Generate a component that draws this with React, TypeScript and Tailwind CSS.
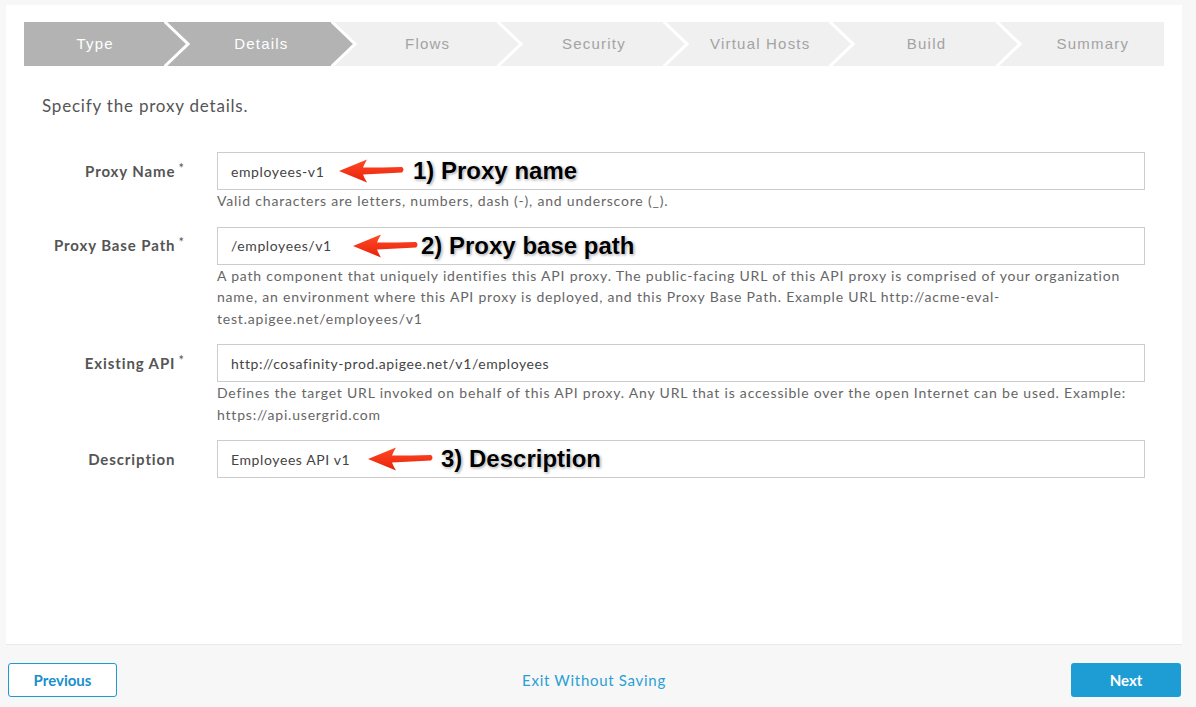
import React from 'react'

const steps = ['Type', 'Details', 'Flows', 'Security', 'Virtual Hosts', 'Build', 'Summary']
const activeCount = 2

const ACTIVE = '#b3b3b3'
const IDLE = '#f0f0f0'

function Chevron({ next }: { next: string }) {
  return (
    <svg className="absolute right-0 top-0 h-[44px] w-[26px]" viewBox="0 0 26 44">
      <polygon points="0,0 26,0 26,44 0,44 24,22" fill={next} />
      <polyline points="0,-1 24,22 0,45" fill="none" stroke="#fff" strokeWidth="3" />
    </svg>
  )
}

function Arrow() {
  return (
    <svg width="66" height="24" viewBox="0 0 66 24" className="shrink-0">
      <defs>
        <linearGradient id="arrowFill" x1="0" y1="0" x2="0" y2="1">
          <stop offset="0" stopColor="#ff4a26" />
          <stop offset="1" stopColor="#e8220a" />
        </linearGradient>
      </defs>
      <path
        d="M0 12 L28 0.5 Q25 5.5 24 8.5 Q44 8.5 63 8 Q66 10.5 63 13.5 Q44 14.5 24 15.5 Q25 18.5 28 23.5 Z"
        fill="url(#arrowFill)"
      />
    </svg>
  )
}

function Note({ left, arrowGap, text }: { left: number; arrowGap: number; text: string }) {
  return (
    <div className="pointer-events-none absolute top-0 flex h-full items-center" style={{ left }}>
      <Arrow />
      <span
        className="font-['Liberation_Sans',Arial,sans-serif] text-[24px] leading-none font-bold tracking-normal text-black [text-shadow:0_0_1px_#fff,0_0_2px_#fff,1px_1px_3px_rgba(0,0,0,0.45)]"
        style={{ marginLeft: arrowGap }}
      >
        {text}
      </span>
    </div>
  )
}

interface Field {
  label: string
  required: boolean
  value: string
  help?: string
  note?: { left: number; gap: number; text: string }
}

const fields: Field[] = [
  {
    label: 'Proxy Name',
    required: true,
    value: 'employees-v1',
    help: 'Valid characters are letters, numbers, dash (-), and underscore (_).',
    note: { left: 121, gap: 8, text: '1) Proxy name' }
  },
  {
    label: 'Proxy Base Path',
    required: true,
    value: '/employees/v1',
    help: 'A path component that uniquely identifies this API proxy. The public-facing URL of this API proxy is comprised of your organization name, an environment where this API proxy is deployed, and this Proxy Base Path. Example URL http://acme-eval-test.apigee.net/employees/v1',
    note: { left: 135, gap: 2, text: '2) Proxy base path' }
  },
  {
    label: 'Existing API',
    required: true,
    value: 'http://cosafinity-prod.apigee.net/v1/employees',
    help: 'Defines the target URL invoked on behalf of this API proxy. Any URL that is accessible over the open Internet can be used. Example: https://api.usergrid.com'
  },
  {
    label: 'Description',
    required: false,
    value: 'Employees API v1',
    note: { left: 150, gap: 7, text: '3) Description' }
  }
]

export default function App() {
  return (
    <div className="flex h-[707px] w-[1196px] flex-col bg-[#f7f7f7] font-['Lato','Open_Sans',sans-serif]">
      <div className="mt-[5px] ml-[6px] h-[640px] w-[1176px] border-b border-[#e9e9e9] bg-white px-[18px] pt-[17px]">
        {/* wizard steps */}
        <div className="flex h-[44px] w-[1140px]">
          {steps.map((s, i) => {
            const active = i < activeCount
            const last = i === steps.length - 1
            const next = i + 1 < activeCount ? ACTIVE : IDLE
            return (
              <div
                key={s}
                className={`relative flex h-full flex-1 items-center justify-center font-['Liberation_Sans',Arial,sans-serif] text-[15px] tracking-[1.2px] ${
                  active ? 'bg-[#b3b3b3] text-white' : 'bg-[#f0f0f0] text-[#a3a3a3]'
                } ${last ? '' : 'pr-[24px]'}`}
              >
                {s}
                {!last && <Chevron next={next} />}
              </div>
            )
          })}
        </div>

        <p className="mt-[28px] pl-[18px] text-[17px] leading-[24px] tracking-[0.8px] text-[#555]">
          Specify the proxy details.
        </p>

        <div className="mt-[34px] flex flex-col">
          {fields.map((f) => (
            <div key={f.label} className="mb-[15px] flex">
              <div className="flex h-[38px] w-[160px] shrink-0 items-center justify-end text-[15px] font-bold tracking-[0.9px] text-[#555]">
                {f.label}
                <span className={`ml-[3px] -mt-[5px] text-[13px] font-normal tracking-normal ${f.required ? '' : 'invisible'}`}>
                  *
                </span>
              </div>
              <div className="ml-[33px] w-[928px]">
                <div className="relative flex h-[38px] items-center border border-[#cccccc] bg-white pl-[13px] text-[14px] tracking-[0.6px] text-[#444]">
                  {f.value}
                  {f.note && <Note left={f.note.left} arrowGap={f.note.gap} text={f.note.text} />}
                </div>
                {f.help && <p className="text-[14px] leading-[21.5px] tracking-[0.8px] text-[#666]">{f.help}</p>}
              </div>
            </div>
          ))}
        </div>
      </div>

      {/* footer */}
      <div className="flex flex-1 items-start justify-between pt-[18px] pr-[15px] pl-[8px]">
        <button className="h-[34px] w-[109px] rounded-[3px] border border-[#1c9ad6] bg-white text-[15px] font-bold text-[#1a8fcc]">
          Previous
        </button>
        <span className="mt-[6px] text-[15px] tracking-[0.7px] text-[#2a9fd6]">Exit Without Saving</span>
        <button className="h-[34px] w-[110px] rounded-[3px] bg-[#1e9dd5] text-[15px] font-bold text-white">Next</button>
      </div>
    </div>
  )
}
